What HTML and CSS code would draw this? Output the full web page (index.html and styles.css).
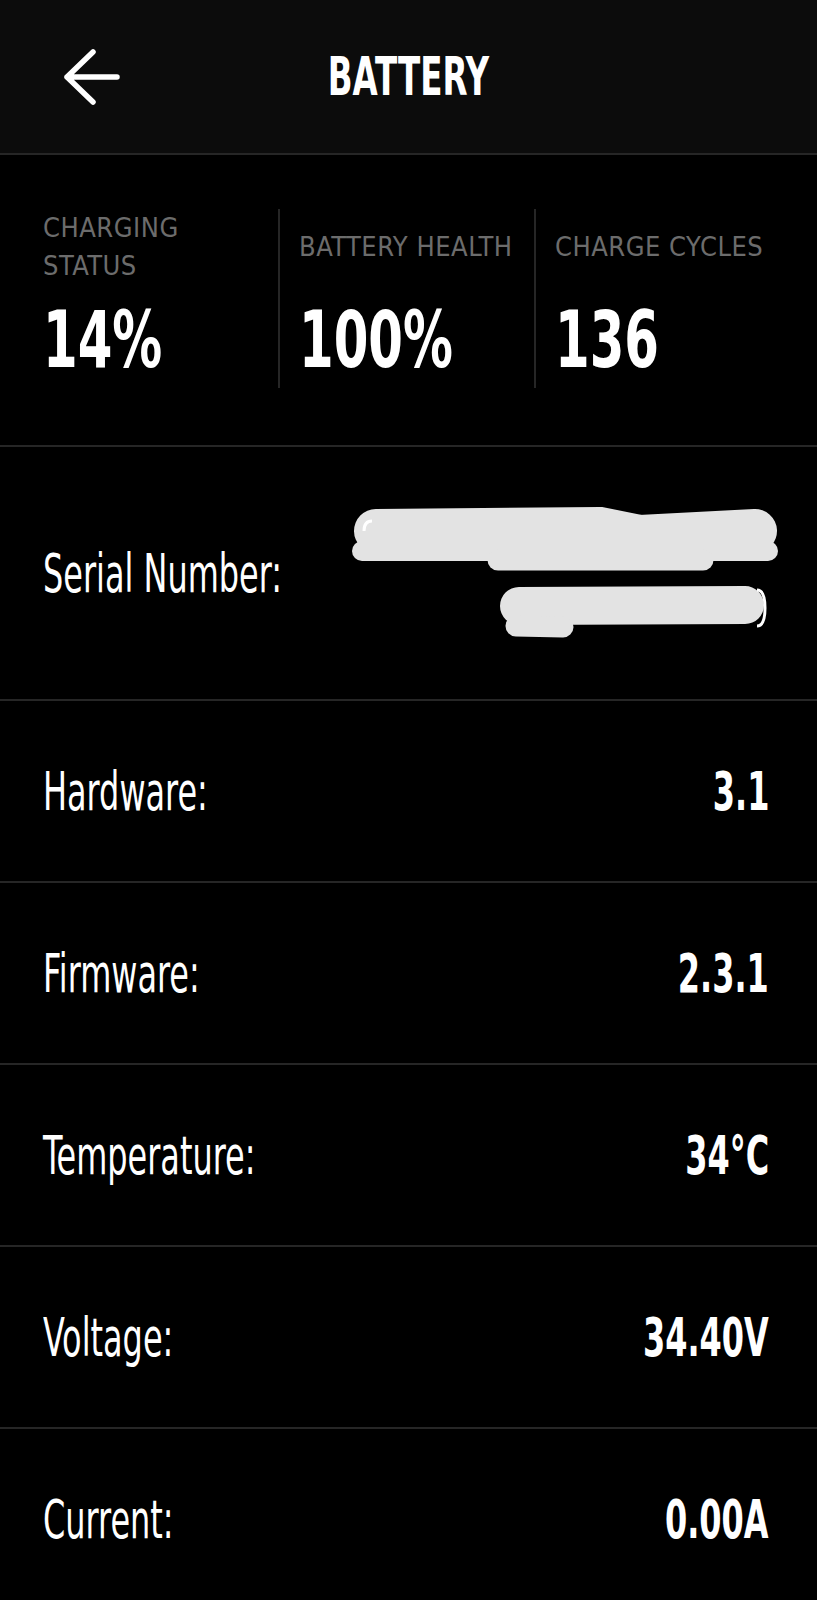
FILE: index.html
```html
<!DOCTYPE html>
<html lang="en">
<head>
    <meta charset="UTF-8">
    <meta name="viewport" content="width=device-width, initial-scale=1.0">
    <title>Battery</title>
    <link rel="stylesheet" href="styles.css">
</head>
<body>
    <header class="topbar">
        <button class="back" aria-label="Back">
            <svg width="60" height="60" viewBox="0 0 60 60">
                <path d="M31 5 L5 30 L31 55 M5 30 H55" fill="none" stroke="#fff" stroke-width="5.5" stroke-linecap="round" stroke-linejoin="round"/>
            </svg>
        </button>
        <h1 class="title"><span class="cond">BATTERY</span></h1>
    </header>

    <section class="stats">
        <div class="stat">
            <div class="stat-label">CHARGING<br>STATUS</div>
            <div class="stat-value"><span class="cond">14%</span></div>
        </div>
        <div class="stat">
            <div class="stat-label">BATTERY HEALTH</div>
            <div class="stat-value"><span class="cond">100%</span></div>
        </div>
        <div class="stat">
            <div class="stat-label">CHARGE CYCLES</div>
            <div class="stat-value"><span class="cond">136</span></div>
        </div>
    </section>

    <div class="row serial">
        <span class="label cond">Serial Number:</span>
        <!-- scribbled-out serial -->
        <svg class="redacted" width="426" height="132" viewBox="352 508 426 132">
            <g stroke="#e3e3e3" stroke-linecap="round" fill="none">
                <path d="M376 532 L600 530 L640 538 L755 532" stroke-width="44"/>
                <path d="M362 552 L768 552" stroke-width="20"/>
                <path d="M498 561 L703 561" stroke-width="21"/>
                <path d="M519 607 L745 606" stroke-width="38"/>
                <path d="M516 627 L563 628" stroke-width="21"/>
            </g>
            <path d="M372 522 Q364 522 364 532" fill="none" stroke="#fff" stroke-width="3"/>
            <path d="M757 591 Q765 591 765 609 Q765 627 757 627" fill="none" stroke="#fff" stroke-width="3"/>
        </svg>
    </div>
    <div class="row">
        <span class="label cond">Hardware:</span>
        <span class="value cond">3.1</span>
    </div>
    <div class="row">
        <span class="label cond">Firmware:</span>
        <span class="value cond">2.3.1</span>
    </div>
    <div class="row">
        <span class="label cond">Temperature:</span>
        <span class="value cond">34°C</span>
    </div>
    <div class="row">
        <span class="label cond">Voltage:</span>
        <span class="value cond">34.40V</span>
    </div>
    <div class="row">
        <span class="label cond">Current:</span>
        <span class="value cond">0.00A</span>
    </div>
</body>
</html>
```

FILE: styles.css
```css
body {
    margin: 0;
    background-color: #000;
    color: #fff;
    font-family: "DejaVu Sans Condensed", "DejaVu Sans", sans-serif;
    font-stretch: condensed;
}
/* the app uses a condensed DIN, squeeze the wider DejaVu to match */
.cond {
    display: inline-block;
    white-space: nowrap;
    transform: scaleX(0.67);
    transform-origin: left center;
}
.topbar {
    height: 153px;
    background-color: #0c0c0c;
    border-bottom: 2px solid #262626;
    display: flex;
    align-items: center;
    justify-content: center;
    position: relative;
}
.back {
    position: absolute;
    left: 62px;
    top: 47px;
    background: none;
    border: none;
    padding: 0;
    display: block;
}
.back svg {
    display: block;
}
.title {
    margin: 0;
    font-size: 54px;
    font-weight: bold;
    line-height: 1;
}
.title .cond {
    transform-origin: center;
}
.stats {
    display: grid;
    grid-template-columns: 235px 256px 1fr;
    padding: 54px 43px 57px;
    border-bottom: 2px solid #262626;
}
.stat {
    height: 179px;
    display: flex;
    flex-direction: column;
}
.stat + .stat {
    border-left: 2px solid #262626;
    padding-left: 19px;
}
.stat-label {
    height: 76px;
    display: flex;
    align-items: center;
    color: #6c6c6c;
    font-size: 27px;
    line-height: 38px;
    letter-spacing: 0.5px;
    white-space: nowrap;
}
.stat-value {
    margin-top: 16px;
    font-size: 78px;
    font-weight: bold;
    line-height: 1;
}
.stat-value .cond {
    transform: scaleX(0.71);
}
.row {
    height: 180px;
    display: flex;
    align-items: center;
    justify-content: space-between;
    padding: 0 48px 0 43px;
    border-bottom: 2px solid #262626;
    font-size: 53px;
    line-height: 1;
}
.row.serial {
    height: 252px;
    padding-right: 39px;
}
.serial .label {
    flex-shrink: 1;
    min-width: 0;
}
.value {
    font-weight: bold;
}
.value.cond {
    transform-origin: right center;
}
.redacted {
    display: block;
    flex-shrink: 0;
}
```
